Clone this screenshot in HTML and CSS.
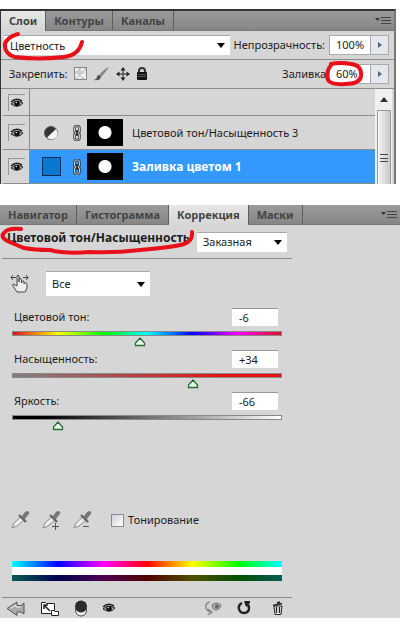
FILE: index.html
```
<!DOCTYPE html>
<html lang="ru">
<head>
    <meta charset="UTF-8">
    <meta name="viewport" content="width=device-width, initial-scale=1.0">
    <title>Слои и коррекция</title>
    <link rel="stylesheet" href="styles.css">
</head>
<body>
    <!-- Shared icons -->
    <svg class="sprite" aria-hidden="true">
        <symbol id="eye" viewBox="0 0 14 12">
            <path d="M1 5Q6 0 12 4" fill="none" stroke="#222" stroke-width="1.6"/>
            <path d="M1 7Q6 2 13 6Q8 12 1 7Z" fill="#aaa" stroke="#222"/>
            <circle cx="7" cy="6.5" r="2.8" fill="#111"/>
            <circle cx="6.3" cy="5.5" r=".7" fill="#fff"/>
        </symbol>
        <symbol id="menu" viewBox="0 0 16 10">
            <path d="M0 2H5L2.5 5Z" fill="#333"/>
            <path d="M6 1.5H16M6 4.5H16M6 7.5H16" stroke="#444"/>
        </symbol>
        <symbol id="chain" viewBox="0 0 10 16">
            <rect x="2.5" y="1" width="5" height="7" rx="2" fill="none" stroke="#333" stroke-width="2.4"/>
            <rect x="2.5" y="8" width="5" height="7" rx="2" fill="none" stroke="#333" stroke-width="2.4"/>
            <rect x="2.5" y="1" width="5" height="7" rx="2" fill="none" stroke="#ddd" stroke-width=".9"/>
            <rect x="2.5" y="8" width="5" height="7" rx="2" fill="none" stroke="#ddd" stroke-width=".9"/>
            <path d="M5 5V11" stroke="#222" stroke-width="1.6"/>
        </symbol>
        <symbol id="dropper" viewBox="0 0 22 20">
            <path d="M2 18L4 13L12 6L15 9L7 16Z" fill="#eee" stroke="#888"/>
            <path d="M9 5L16 12" stroke="#666" stroke-width="2.4"/>
            <path d="M12 6L15 2Q18 0 19 2Q20 4 18 5L15 9Z" fill="#777"/>
        </symbol>
    </svg>

    <section class="panel layers">
        <nav class="tabs">
            <button class="tab active">Слои</button>
            <button class="tab">Контуры</button>
            <button class="tab">Каналы</button>
            <button class="menu" aria-label="Меню панели"><svg width="16" height="10"><use href="#menu"/></svg></button>
        </nav>
        <div class="row blend">
            <div class="blend-box">
                <select class="select" aria-label="Режим наложения"><option>Цветность</option></select>
                <svg class="mark" width="84" height="32" viewBox="0 0 84 32" fill="none">
                    <path d="M16 4Q5 7 3 14Q2 24 13 27Q35 30 62 27Q77 25 80 12" stroke="#e8101a" stroke-width="4" stroke-linecap="round"/>
                </svg>
            </div>
            <label for="opacity">Непрозрачность:</label>
            <div class="spin"><input id="opacity" value="100%"><button aria-label="Изменить непрозрачность"></button></div>
        </div>
        <div class="row lock">
            <span>Закрепить:</span>
            <button class="icon" aria-label="Прозрачные пиксели">
                <svg width="14" height="14"><rect x=".5" y=".5" width="12" height="12" fill="#eee" stroke="#888"/><path d="M4 1h3v3h3v3H7v3H4V7H1V4h3zM10 1h2v3h-2zM1 10h3v2H1zM7 10h3v2H7z" fill="#ccc"/></svg>
            </button>
            <button class="icon" aria-label="Пиксели изображения">
                <svg width="16" height="14"><path d="M15 0Q10 2 5 8L7 10Q12 5 15 0Z" fill="#888"/><path d="M5 8L7 10Q6 14 0 13Q3 12 3 10Q3 8 5 8Z" fill="#555"/></svg>
            </button>
            <button class="icon" aria-label="Положение">
                <svg width="14" height="14"><path d="M7 2V12M2 7H12" stroke="#222"/><path d="M7 0L9.500 3.500H4.500ZM7 14L4.500 10.500H9.500ZM0 7L3.500 4.500V9.500ZM14 7L10.500 9.500V4.500Z" fill="#222"/></svg>
            </button>
            <button class="icon" aria-label="Закрепить всё">
                <svg width="12" height="14"><path d="M3 7V4Q3 1 6 1Q9 1 9 4V7" fill="none" stroke="#333" stroke-width="2"/><rect x="1" y="5" width="10" height="8" rx="1" fill="#111"/><path d="M2 7.500H10M2 9.500H10" stroke="#555"/></svg>
            </button>
            <label class="push" for="fill">Заливка:</label>
            <div class="spin">
                <input id="fill" value="60%"><button aria-label="Изменить заливку"></button>
                <svg class="mark fill-mark" width="42" height="28" viewBox="0 0 42 28" fill="none">
                    <path d="M9 4Q2 12 5 20Q8 25 22 24Q37 24 38 16Q39 5 28 4Q17 2 8 4" stroke="#e8101a" stroke-width="4" stroke-linecap="round"/>
                </svg>
            </div>
        </div>
        <div class="list">
            <ul>
                <li class="layer short">
                    <button class="visible" aria-label="Видимость слоя"><svg width="14" height="12"><use href="#eye"/></svg></button>
                </li>
                <li class="layer">
                    <button class="visible" aria-label="Видимость слоя"><svg width="14" height="12"><use href="#eye"/></svg></button>
                    <span class="kind"><svg width="16" height="16"><circle cx="8" cy="8" r="6.500" fill="#333" stroke="#555"/><path d="M13 4A6 6 0 0 1 4 12.500Z" fill="#f4f4f4"/></svg></span>
                    <svg class="chain" width="10" height="16"><use href="#chain"/></svg>
                    <span class="mask"></span>
                    <span class="name">Цветовой тон/Насыщенность 3</span>
                </li>
                <li class="layer selected">
                    <button class="visible" aria-label="Видимость слоя"><svg width="14" height="12"><use href="#eye"/></svg></button>
                    <span class="kind"><span class="swatch"></span></span>
                    <svg class="chain" width="10" height="16"><use href="#chain"/></svg>
                    <span class="mask"></span>
                    <span class="name">Заливка цветом 1</span>
                </li>
            </ul>
            <div class="scroll">
                <svg width="8" height="5"><path d="M0 5L4 0L8 5Z" fill="#333"/></svg>
                <div class="scroll-thumb"><svg width="8" height="10"><path d="M0 1.500H8M0 5.500H8M0 8.500H8" stroke="#444"/></svg></div>
            </div>
        </div>
    </section>

    <section class="panel adjust">
        <nav class="tabs">
            <button class="tab">Навигатор</button>
            <button class="tab">Гистограмма</button>
            <button class="tab active">Коррекция</button>
            <button class="tab">Маски</button>
            <button class="menu" aria-label="Меню панели"><svg width="16" height="10"><use href="#menu"/></svg></button>
        </nav>
        <div class="content">
            <header class="head">
                <h2>Цветовой тон/Насыщенность</h2>
                <select class="select" aria-label="Набор"><option>Заказная</option></select>
                <svg class="mark head-mark" width="196" height="30" viewBox="0 0 196 30" fill="none">
                    <path d="M21 3Q7 2 4 7Q-1 12 12 17L24 22Q35 24 50 24Q65 28 90 26Q115 27 140 24Q175 21 184 18Q193 15 192 6" stroke="#e8101a" stroke-width="4" stroke-linecap="round"/>
                </svg>
            </header>
            <div class="range-row">
                <button class="icon" aria-label="Коррекция на изображении">
                    <svg width="20" height="21" fill="#eee" stroke="#444"><path d="M1 4.500H6M13 4.500H18M3 2L1 4.500L3 7M16 2L18 4.500L16 7" fill="none"/><path d="M7 19L3 13Q2 10 5 12L7 13V3Q8 1 9 3V9V6Q11 4 11.500 7V10Q13 6 14 9V11Q16 8 17 11V15L15 19Z"/></svg>
                </button>
                <select class="select" aria-label="Диапазон"><option>Все</option></select>
            </div>
            <div class="control">
                <div class="control-head"><label for="hue">Цветовой тон:</label><input class="value" aria-label="Значение тона" value="-6"></div>
                <div class="track hue"><input id="hue" type="range" min="-180" max="180" value="-9"></div>
            </div>
            <div class="control">
                <div class="control-head"><label for="sat">Насыщенность:</label><input class="value" aria-label="Значение насыщенности" value="+34"></div>
                <div class="track sat"><input id="sat" type="range" min="-100" max="100" value="34"></div>
            </div>
            <div class="control">
                <div class="control-head"><label for="light">Яркость:</label><input class="value" aria-label="Значение яркости" value="-66"></div>
                <div class="track light"><input id="light" type="range" min="-100" max="100" value="-66"></div>
            </div>
            <div class="tools">
                <button class="icon" aria-label="Пипетка"><svg width="22" height="20"><use href="#dropper"/></svg></button>
                <button class="icon" aria-label="Добавить к образцу"><svg width="22" height="20"><use href="#dropper"/><path d="M11 16.500H18M14.500 13V20" stroke="#555"/></svg></button>
                <button class="icon" aria-label="Вычесть из образца"><svg width="22" height="20"><use href="#dropper"/><path d="M11 16.500H17" stroke="#555"/></svg></button>
                <label class="check"><input type="checkbox">Тонирование</label>
            </div>
            <div class="spectrum">
                <div class="bar"></div>
                <div class="bar dark"></div>
            </div>
            <footer class="actions">
                <button class="icon" aria-label="Назад"><svg width="20" height="17"><path d="M1 8.500L11 2V5.500H15L18 3V14L15 12H11V15.500Z" fill="#aaa" stroke="#555"/><path d="M4 8.500L10 5V7H15" fill="none" stroke="#eee"/></svg></button>
                <button class="icon" aria-label="Развернуть"><svg width="20" height="17" stroke="#222"><path d="M1.500 2.500H5.500L6.500 3.500H14.500V13.500H1.500Z" fill="#fff"/><path d="M4 9V5H8M4 5L10 11" fill="none" stroke-width="1.500"/><path d="M11.500 10.500H14L15 11.500H18.500V15.500H11.500Z" fill="#fff"/></svg></button>
                <button class="icon" aria-label="Привязать к слою"><svg width="14" height="17"><circle cx="7" cy="10.500" r="5.500" fill="#eee" stroke="#444"/><circle cx="7" cy="6.500" r="6" fill="#2b2b2b"/></svg></button>
                <button class="icon" aria-label="Видимость"><svg width="14" height="12"><use href="#eye"/></svg></button>
                <button class="icon push" aria-label="Предыдущее состояние"><svg width="20" height="14"><path d="M7 1Q2 2 3 7Q4 10 7 11M5 8L9 11L5 14" fill="none" stroke="#888" stroke-width="1.500"/><path d="M9 4Q13 0 18 4Q17 9 12 9Q9 8 9 4Z" fill="#aaa" stroke="#777"/><circle cx="14" cy="5.500" r="2" fill="#666"/></svg></button>
                <button class="icon" aria-label="Сброс"><svg width="14" height="14"><path d="M5 2Q1 4 2 8Q3 12 7 12Q12 12 12 7Q12 4 9 3" fill="none" stroke="#222" stroke-width="2.400"/><path d="M7 0H13V2L9 6Z" fill="#222"/></svg></button>
                <button class="icon trash" aria-label="Удалить"><svg width="12" height="15"><path d="M2 5L3 13.500H9L10 5Z" fill="#eee" stroke="#222"/><path d="M1 4.500L10 2.500M5 2L8 1" stroke="#222" stroke-width="1.600"/><path d="M4.500 6V12M7.500 6V12" stroke="#222" stroke-width="1.300"/></svg></button>
            </footer>
        </div>
    </section>
</body>
</html>
```

FILE: styles.css
```
:root {
    --panel: #d6d6d6;
    --line: #8c8c8c;
    --arrow: url("data:image/svg+xml,%3Csvg xmlns='http://www.w3.org/2000/svg' width='8' height='5'%3E%3Cpath d='M0 0H8L4 5Z'/%3E%3C/svg%3E");
}

* {
    box-sizing: border-box;
    margin: 0;
    padding: 0;
}

body {
    padding-top: 9px;
    background: white;
    color: #1c1c1c;
    font: 11px/14px 'Noto Sans', sans-serif;
}

button,
input,
select {
    font: inherit;
    color: inherit;
    border: none;
    border-radius: 0;
    background: none;
}

input {
    min-width: 0;
}

svg {
    display: block;
}

.sprite {
    position: absolute;
    width: 0;
    height: 0;
}

.panel {
    background: var(--panel);
}

.layers {
    margin-right: 4px;
    border: solid #333;
    border-width: 2px 2px 0 1px;
    border-right-color: #777;
}

.adjust {
    margin-top: 21px;
}

.tabs {
    display: flex;
    height: 20px;
    background: linear-gradient(#9b9b9b, #868686);
    border-bottom: 1px solid #777;
}

.tab {
    padding: 0 8px;
    border-right: 1px solid #5e5e5e;
    color: #444;
    font-weight: bold;
}

.tab.active {
    margin-bottom: -1px;
    background: linear-gradient(#e6e6e6, var(--panel));
}

.menu {
    margin-left: auto;
    padding: 0 3px;
}

.row {
    display: flex;
    align-items: center;
    gap: 4px;
    height: 29px;
    padding: 0 5px 0 3px;
    border-bottom: 1px solid var(--line);
}

.blend-box {
    position: relative;
    flex: 1;
    min-width: 0;
}

.select {
    appearance: none;
    width: 100%;
    height: 20px;
    padding: 0 20px 0 6px;
    border-top: 1px solid #aaa;
    background: white var(--arrow) no-repeat right 5px center;
}

/* Red pencil marks over the fields */
.mark {
    position: absolute;
    top: -5px;
    left: -2px;
    pointer-events: none;
}

.spin {
    display: flex;
    position: relative;
    width: 60px;
    height: 20px;
    border: 1px solid #aaa;
    background: white;
}

.spin input {
    flex: 1;
    padding-left: 6px;
}

.spin button {
    width: 18px;
    border-left: 1px solid #aaa;
    background: #e4e8ee url("data:image/svg+xml,%3Csvg xmlns='http://www.w3.org/2000/svg' width='4' height='6'%3E%3Cpath d='M0 0L4 3L0 6Z' fill='%23567'/%3E%3C/svg%3E") no-repeat center;
}

.fill-mark {
    left: -7px;
}

.lock {
    gap: 6px;
    padding-left: 8px;
}

.push {
    margin-left: auto;
}

.lock .push {
    margin-right: -6px;
}

.list {
    display: flex;
}

.list ul {
    flex: 1;
    padding-left: 2px;
    list-style: none;
}

.layer {
    display: flex;
    align-items: center;
    height: 34px;
    border-bottom: 1px solid var(--line);
}

.layer.short {
    height: 27px;
}

.visible {
    display: flex;
    align-items: center;
    justify-content: center;
    align-self: stretch;
    width: 27px;
    border-right: 1px solid var(--line);
    background: var(--panel);
}

.visible svg {
    box-sizing: content-box;
    padding: 2px 1px;
    border: solid #999;
    border-width: 1px 0 0 1px;
}

.kind {
    display: flex;
    justify-content: center;
    width: 42px;
}

.swatch {
    width: 19px;
    height: 19px;
    border: 1px solid #0b2a55;
    background: #0b78d0;
}

.mask {
    width: 36px;
    height: 27px;
    margin: 0 9px 0 5px;
    background: radial-gradient(circle, white 6px, black 7px);
}

.selected {
    background: #3399fe;
    color: white;
    font-size: 12px;
    font-weight: bold;
}

.scroll {
    display: flex;
    flex-direction: column;
    align-items: center;
    width: 17px;
    margin-right: 2px;
    padding-top: 8px;
    background: #f0f0f0;
}

.scroll-thumb {
    display: flex;
    flex: 1;
    align-items: center;
    justify-content: center;
    width: 14px;
    margin-top: 8px;
    padding-top: 20px;
    border: 1px solid #999;
    border-bottom: none;
    background: linear-gradient(90deg, #f5f5f5, #c8c8cc);
}

.content {
    max-width: 292px;
    padding-left: 2px;
}

.head {
    display: flex;
    position: relative;
    align-items: center;
    height: 34px;
    padding: 0 5px;
    border-bottom: 1px solid var(--line);
}

.head h2 {
    flex: 1;
    padding-bottom: 8px;
    font-size: 12px;
    white-space: nowrap;
}

.head .select {
    width: 90px;
}

.head-mark {
    top: 1px;
}

.range-row {
    display: flex;
    align-items: center;
    gap: 16px;
    padding: 12px 8px;
}

.range-row .select {
    width: 104px;
    height: 25px;
}

.control {
    height: 42px;
    padding: 0 10px;
}

.control-head {
    display: flex;
    align-items: center;
    justify-content: space-between;
    padding: 0 4px 5px 2px;
}

.value {
    width: 46px;
    height: 18px;
    padding-left: 7px;
    border-top: 1px solid #999;
    background: white;
}

.track {
    height: 5px;
    border: 1px solid #888;
}

.track input {
    appearance: none;
    display: block;
    box-sizing: content-box;
    width: calc(100% + 14px);
    height: 10px;
    margin: 0 -7px;
    padding-top: 5px;
}

.track input::-webkit-slider-thumb {
    appearance: none;
    width: 12px;
    height: 10px;
    background: url("data:image/svg+xml,%3Csvg xmlns='http://www.w3.org/2000/svg' width='12' height='10'%3E%3Cpath d='M6 1L10.500 6V8.500H1.500V6Z' fill='%23e8ffe8' stroke='%23276a38' stroke-width='1.300'/%3E%3C/svg%3E");
}

.hue {
    background: linear-gradient(90deg, #e01020, #ff0 17%, #0f0 34%, #0ff 50%, #00f 67%, #f0f 84%, #e01020);
}

.sat {
    background: linear-gradient(90deg, #808080, #e81010 80%);
}

.light {
    background: linear-gradient(90deg, black 12%, white);
}

.tools {
    display: flex;
    align-items: center;
    gap: 9px;
    padding: 76px 8px 31px;
}

.check {
    display: flex;
    align-items: center;
    gap: 4px;
    margin-left: 8px;
}

.check input {
    appearance: none;
    width: 13px;
    height: 13px;
    border: 1px solid #8a8a8a;
    background: linear-gradient(135deg, #ccd2dc, white);
}

.spectrum {
    display: flex;
    flex-direction: column;
    gap: 8px;
    margin: 0 10px 16px;
    background: white;
}

.bar {
    height: 6px;
    background: linear-gradient(90deg, #0ff, #00f 17%, #f0f 34%, #f00 50%, #ff0 67%, #0f0 84%, #0ff);
}

.bar.dark {
    background: linear-gradient(90deg, #065c55, #000050 17%, #500050 34%, #500000 50%, #505000 67%, #005000 84%, #065c55);
}

.actions {
    display: flex;
    align-items: center;
    gap: 14px;
    height: 21px;
    padding: 0 8px 0 4px;
    border-top: 1px solid var(--line);
}

.trash {
    margin-left: 7px;
}
```
